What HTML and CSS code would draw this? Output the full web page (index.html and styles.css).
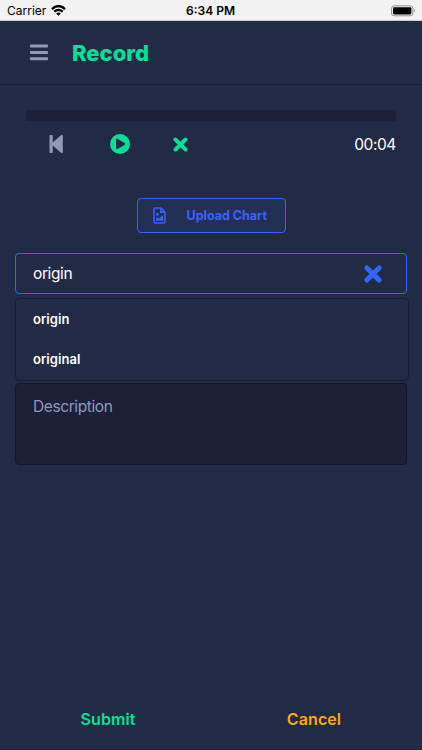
FILE: index.html
```html
<!DOCTYPE html>
<html lang="en">
<head>
<meta charset="utf-8">
<meta name="viewport" content="width=device-width, initial-scale=1">
<title>Record</title>
<link rel="stylesheet" href="styles.css">
</head>
<body>
<div class="screen">
  <div class="status">
    <div class="carrier"><span>Carrier</span>
      <svg width="15" height="11" viewBox="0 0 15 11" fill="none" stroke="#000" stroke-width="2.3"><path d="M.9 4.1Q7.5-2 14.1 4.1M3.3 6.7Q7.5 3 11.7 6.7"/><path d="M5.2 8.4Q7.5 6.6 9.8 8.4L7.5 10.8Z" fill="#000" stroke="none"/></svg>
    </div>
    <div class="clock">6:34 PM</div>
    <svg class="battery" width="25" height="12" viewBox="0 0 25 12"><rect x=".5" y=".8" width="21.4" height="10" rx="2.8" fill="none" stroke="#929292"/><rect x="2" y="2.2" width="18.4" height="7.2" rx="1.4"/><path d="M23.2 4.2Q25.1 5.8 23.2 7.4Z" fill="#929292"/></svg>
  </div>
  <header class="header">
    <svg width="18" height="17" viewBox="0 0 18 17" fill="#8f9bb3"><rect y=".5" width="18" height="3" rx=".8"/><rect y="6.9" width="18" height="3" rx=".8"/><rect y="13.3" width="18" height="3" rx=".8"/></svg>
    <h1>Record</h1>
  </header>
  <main class="content">
    <div class="track"></div>
    <div class="controls">
      <svg class="back" width="14" height="20" viewBox="0 0 14 20" fill="#8f9bb3"><rect x=".5" y="1" width="3.2" height="18" rx=".7"/><path d="M3.2 9.1 12 1.2Q13.8 0 13.8 2V18Q13.8 20 12 18.8L3.2 10.9Z"/></svg>
      <svg class="play" width="20" height="20" viewBox="0 0 20 20"><path fill="#00e096" fill-rule="evenodd" d="M10 0a10 10 0 1 0 0 20a10 10 0 1 0 0-20ZM7.5 4.7 14.6 9.1Q15.8 10 14.6 10.9L7.5 15.1Q6 15.7 6 14.1V5.8Q6 4 7.5 4.7Z"/></svg>
      <svg class="stop" width="15" height="15" viewBox="0 0 15 15" stroke="#00e096" stroke-width="3.9" stroke-linecap="round"><path d="M2.5 2.5 12.5 12.5M12.5 2.5 2.5 12.5"/></svg>
      <span class="time">00:04</span>
    </div>
    <button class="upload" type="button">
      <svg width="13" height="17" viewBox="0 0 13 17" fill="none" stroke="#3366ff" stroke-width="1.5"><path d="M2 1H8L12 5V15Q12 16 11 16H2Q1 16 1 15V2Q1 1 2 1Z" stroke-linejoin="round"/><path d="M7.8 1V5.2H12"/><circle cx="4.4" cy="7.4" r="1.3" fill="#3366ff" stroke="none"/><path d="M3 13.7V11.8L4.7 10.3 6 11.6 9.6 8.4 10.2 9V13.7Z" fill="#3366ff" stroke="none"/></svg>
      <span>Upload Chart</span>
    </button>
    <div class="field"><span>origin</span>
      <svg width="18" height="18" viewBox="0 0 18 18" stroke="#3366ff" stroke-width="4.9" stroke-linecap="round"><path d="M2.9 2.9 15.1 15.1M15.1 2.9 2.9 15.1"/></svg>
    </div>
    <div class="options">
      <div class="option">origin</div>
      <div class="option">original</div>
    </div>
    <div class="description">Description</div>
  </main>
  <footer class="actions">
    <div class="submit">Submit</div>
    <div class="cancel">Cancel</div>
  </footer>
</div>
</body>
</html>
```
FILE: styles.css
```css
* { box-sizing: border-box; }
body { margin: 0; background: #222b45; color: #fff; font-family: Inter, "Liberation Sans", sans-serif; }
.screen { height: 750px; display: flex; flex-direction: column; overflow: hidden; border-bottom: 1px solid #1c2440; }
svg { display: block; flex: none; }
.status { height: 21px; flex: none; background: #f2f2f2; color: #000; display: grid; grid-template-columns: 1fr auto 1fr; align-items: center; padding: 1px 6px 0 7px; border-bottom: 1px solid #c5c9d8; font-size: 12px; line-height: 20px; }
.carrier { display: flex; align-items: center; gap: 5px; }
.carrier svg { margin-bottom: 1px; }
.clock { font-weight: 600; margin-right: 2px; }
.battery { justify-self: end; margin-bottom: 1px; }
.header { height: 64px; flex: none; display: flex; align-items: center; gap: 24px; padding-left: 30px; border-bottom: 1px solid #171d35; }
.header h1 { margin: 0; color: #00e096; font-size: 22px; line-height: 28px; font-weight: 800; }
.content { flex: 1; padding: 25px 15px 0; display: flex; flex-direction: column; }
.track { height: 11px; flex: none; margin: 0 11px 0 11px; background: #1a2138; }
.controls { display: flex; align-items: center; height: 24px; flex: none; margin: 11px 11px 0 34px; }
.play { margin-left: 47px; }
.stop { margin-left: 43px; }
.time { margin-left: auto; font-size: 15.5px; letter-spacing: -.4px; }
.upload { align-self: center; width: 149px; height: 35px; flex: none; margin: 42px 0 0; display: flex; align-items: center; gap: 21px; padding: 0 0 0 15px; border: 1px solid #3366ff; border-radius: 4px; background: #242f56; color: #3366ff; font: 700 12.5px/16px Inter, sans-serif; }
.field { width: 392px; height: 41px; flex: none; margin-top: 20px; display: flex; align-items: center; justify-content: space-between; padding: 0 24px 0 17px; border: 1px solid #3366ff; border-radius: 4px; font-size: 15.5px; letter-spacing: -.4px; }
.options { width: 394px; height: 83px; flex: none; margin-top: 4px; padding: 0 17px; border: 1px solid #171d35; border-radius: 4px; }
.option { height: 40px; line-height: 40px; font-size: 13px; font-weight: 600; letter-spacing: .08px; }
.description { width: 392px; height: 82px; flex: none; margin-top: 2px; padding: 13px 17px; background: #1c2039; border: 1px solid #12172c; border-radius: 4px; color: #8f9bb3; font-size: 15.5px; line-height: 20px; letter-spacing: -.4px; }
.actions { height: 60px; flex: none; display: grid; grid-template-columns: 216px 196px; text-align: center; align-items: center; font-size: 16px; font-weight: 600; letter-spacing: .1px; }
.submit { color: #00e096; }
.cancel { color: #ffaa00; }
```
